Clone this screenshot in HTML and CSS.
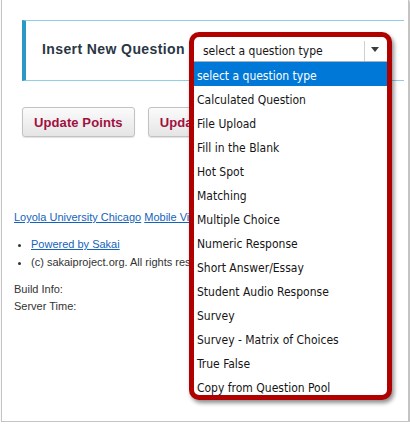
FILE: index.html
```html
<!DOCTYPE html>
<html lang="en">
<head>
<meta charset="utf-8">
<title>Insert New Question</title>
<link rel="stylesheet" href="styles.css">
</head>
<body>
<div class="frame">
  <div class="insert-bar">
    <span class="insert-label">Insert New Question</span>
    <div class="select-slot">
      <div class="dropdown">
        <div class="select-face">
          <span class="select-text">select a question type</span>
          <span class="select-arrow"></span>
        </div>
        <ul class="options">
          <li class="option selected">select a question type</li>
          <li class="option">Calculated Question</li>
          <li class="option">File Upload</li>
          <li class="option">Fill in the Blank</li>
          <li class="option">Hot Spot</li>
          <li class="option">Matching</li>
          <li class="option">Multiple Choice</li>
          <li class="option">Numeric Response</li>
          <li class="option">Short Answer/Essay</li>
          <li class="option">Student Audio Response</li>
          <li class="option">Survey</li>
          <li class="option">Survey - Matrix of Choices</li>
          <li class="option">True False</li>
          <li class="option">Copy from Question Pool</li>
        </ul>
      </div>
    </div>
  </div>

  <div class="actions">
    <button class="btn">Update Points</button>
    <button class="btn">Update Order</button>
  </div>

  <div class="footer">
    <div class="footer-links"><a href="#">Loyola University Chicago</a> <a href="#">Mobile View</a></div>
    <ul class="footer-list">
      <li><a href="#">Powered by Sakai</a></li>
      <li>(c) sakaiproject.org. All rights reserved.</li>
    </ul>
    <div class="build">Build Info:</div>
    <div class="build">Server Time:</div>
  </div>
</div>
</body>
</html>
```

FILE: styles.css
```css
html, body {
  margin: 0;
  padding: 0;
  background: #ffffff;
}

.frame {
  box-sizing: border-box;
  margin-left: 1px;
  width: 408px;
  height: 422px;
  border: 1px solid #c4c4c4;
  border-top: none;
  background: #ffffff;
  box-shadow: 1px 1px 2px rgba(0, 0, 0, 0.35);
  padding-top: 20px;
  overflow: hidden;
  position: relative;
}

.insert-bar {
  display: flex;
  align-items: center;
  height: 59px;
  margin: 0 4px 0 20px;
  padding-left: 16px;
  border-left: 4px solid #2b98c6;
  border-top: 1px solid #8fcde8;
  border-bottom: 1px solid #8fcde8;
}

.insert-label {
  font-family: "Liberation Sans", Arial, sans-serif;
  font-weight: bold;
  font-size: 14px;
  letter-spacing: 0.4px;
  color: #2a3644;
  margin-right: 9px;
  margin-top: -3px;
}

.select-slot {
  position: relative;
  width: 193px;
  height: 25px;
  margin-top: -2px;
}

.dropdown {
  position: absolute;
  z-index: 5;
  top: -5px;
  left: -5px;
  box-sizing: border-box;
  width: 203px;
  height: 368px;
  border: 5px solid #b00000;
  border-radius: 10px;
  background: #ffffff;
  overflow: hidden;
  box-shadow: 2px 3px 4px rgba(0, 0, 0, 0.45);
  font-family: "DejaVu Sans Condensed", "DejaVu Sans", Tahoma, sans-serif;
  font-size: 12px;
  color: #151515;
}

.select-face {
  box-sizing: border-box;
  height: 25px;
  display: flex;
  align-items: center;
  padding-left: 9px;
  padding-top: 4px;
  border-bottom: 1px solid #a9b3bd;
  position: relative;
}

.select-text {
  flex: 1;
}

.select-arrow {
  width: 22px;
  height: 20px;
  border-left: 1px solid #cfcfcf;
  position: relative;
}

.select-arrow::after {
  content: "";
  position: absolute;
  left: 6px;
  top: 6px;
  border-left: 4.5px solid transparent;
  border-right: 4.5px solid transparent;
  border-top: 5px solid #3c3c3c;
}

.options {
  list-style: none;
  margin: 0;
  padding: 0;
}

.option {
  height: 24px;
  line-height: 28px;
  padding-left: 3px;
  white-space: nowrap;
}

.option.selected {
  background: #0078d7;
  color: #ffffff;
}

.actions {
  display: flex;
  gap: 13px;
  margin: 26px 0 0 20px;
}

.btn {
  box-sizing: border-box;
  height: 30px;
  padding: 0 11px;
  font-family: "Liberation Sans", Arial, sans-serif;
  font-weight: bold;
  font-size: 13px;
  letter-spacing: 0.1px;
  color: #a0103f;
  background: linear-gradient(#fbfbfb, #e5e5e5);
  border: 1px solid #c2c2c2;
  border-radius: 3px;
  box-shadow: 0 1px 1px rgba(0, 0, 0, 0.12);
  white-space: nowrap;
}

.footer {
  margin: 73px 0 0 12px;
  font-family: "Liberation Sans", Arial, sans-serif;
  font-size: 11px;
  color: #333333;
}

.footer a {
  color: #1463bb;
  text-decoration: underline;
}

.footer-links {
  line-height: 14px;
  white-space: nowrap;
}

.footer-list {
  margin: 11px 0 10px 0;
  padding-left: 17px;
  line-height: 18px;
  white-space: nowrap;
}

.build {
  line-height: 17px;
}
```
